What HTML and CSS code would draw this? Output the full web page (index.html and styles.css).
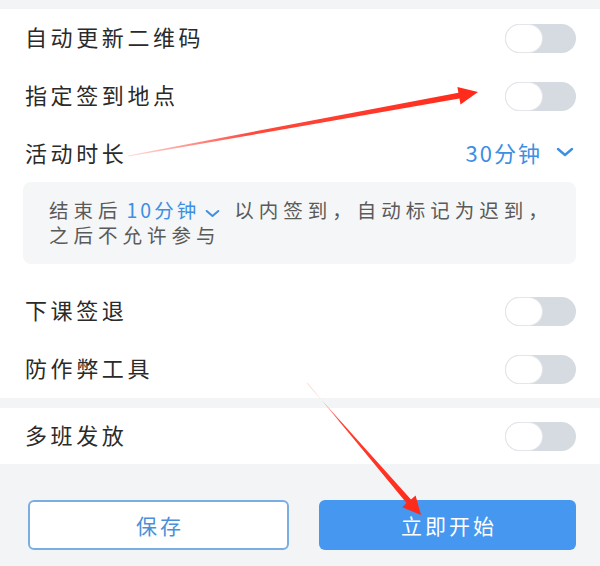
FILE: index.html
```html
<!DOCTYPE html>
<html lang="zh-CN">
<head>
<meta charset="utf-8">
<link rel="stylesheet" href="styles.css">
</head>
<body>
<div class="page">
  <div class="band"></div>
  <section class="card">
    <div class="row r58"><span class="label">自动更新二维码</span><span class="toggle"><span class="knob"></span></span></div>
    <div class="row r58"><span class="label">指定签到地点</span><span class="toggle"><span class="knob"></span></span></div>
    <div class="row r57"><span class="label">活动时长</span><span class="select">30分钟<svg class="chev" viewBox="0 0 18 10"><path d="M2 2 L9 8 L16 2" /></svg></span></div>
    <div class="note">
      <p>结束后<span class="blue">10分钟<svg class="chev small" viewBox="0 0 18 10"><path d="M2 2 L9 8 L16 2" /></svg></span>以内签到，自动标记为迟到，<br>之后不允许参与</p>
    </div>
    <div class="row r58"><span class="label">下课签退</span><span class="toggle"><span class="knob"></span></span></div>
    <div class="row r58"><span class="label">防作弊工具</span><span class="toggle"><span class="knob"></span></span></div>
  </section>
  <div class="gap"></div>
  <section class="card">
    <div class="row r56"><span class="label">多班发放</span><span class="toggle"><span class="knob"></span></span></div>
  </section>
  <footer class="footer">
    <button class="btn outline">保存</button>
    <button class="btn primary">立即开始</button>
  </footer>
  <svg class="arrows" viewBox="0 0 600 566" width="600" height="566">
    <defs>
      <linearGradient id="g1" gradientUnits="userSpaceOnUse" x1="128" y1="156" x2="476" y2="92">
        <stop offset="0" stop-color="#ff2a1a" stop-opacity="0.15"/>
        <stop offset="0.35" stop-color="#ff2a1a" stop-opacity="0.85"/>
        <stop offset="1" stop-color="#ff2a1a" stop-opacity="1"/>
      </linearGradient>
      <linearGradient id="g2" gradientUnits="userSpaceOnUse" x1="307" y1="383" x2="420" y2="513">
        <stop offset="0" stop-color="#ff2a1a" stop-opacity="0.15"/>
        <stop offset="0.3" stop-color="#ff2a1a" stop-opacity="0.9"/>
        <stop offset="1" stop-color="#ff2a1a" stop-opacity="1"/>
      </linearGradient>
    </defs>
    <polygon fill="url(#g1)" points="128.1,156.5 459.4,98.6 460.5,104.4 478,92 457.4,87.0 458.4,92.8 127.9,155.5"/>
    <polygon fill="url(#g2)" points="307.4,382.8 406.5,503.0 402.3,507.3 421,515 415.6,495.5 411.0,499.4 306.6,383.2"/>
  </svg>
</div>
</body>
</html>
```

FILE: styles.css
```css
* { box-sizing: border-box; }
html, body { margin: 0; padding: 0; }
body {
  background: #f3f4f6;
  font-family: "Noto Sans CJK SC", "Noto Sans", sans-serif;
  color: #2a2a2a;
}
.page {
  position: relative;
  width: 600px;
  height: 566px;
  overflow: hidden;
}
.band { height: 9px; }
.card {
  background: #ffffff;
  padding: 0 24px 0 24px;
}
.row {
  display: flex;
  align-items: center;
  justify-content: space-between;
}
.r58 { height: 58px; }
.r57 { height: 57px; }
.r56 { height: 56px; }
.label {
  font-size: 22px;
  letter-spacing: 3.6px;
  padding-left: 1px;
  line-height: 1;
  padding-bottom: 4px;
}
.toggle {
  width: 71px;
  height: 29px;
  border-radius: 15px;
  background: #d6dae1;
  display: flex;
  align-items: center;
  padding-left: 1px;
  margin-top: 1px;
}
.knob {
  width: 36px;
  height: 27px;
  border-radius: 14px;
  background: #ffffff;
  box-shadow: 0 0 0 1px #e4e6ea;
}
.select {
  display: flex;
  align-items: center;
  color: #3d8fe3;
  font-size: 22px;
  letter-spacing: 2px;
  line-height: 1;
  padding-bottom: 4px;
}
.chev {
  width: 18px;
  height: 10px;
  margin-left: 14px;
  margin-right: 2px;
  fill: none;
  stroke: #3d8fe3;
  stroke-width: 2.4;
  stroke-linecap: round;
  stroke-linejoin: round;
}
.chev.small { width: 15px; height: 9px; margin-left: 6px; margin-right: 14px; }
.note {
  background: #f5f6f7;
  border-radius: 8px;
  margin: 0 0 18px -1px;
  padding: 15px 20px 16px 26px;
  height: 82px;
}
.note p {
  margin: 0;
  font-size: 19.5px;
  letter-spacing: 5px;
  line-height: 25px;
  color: #5a5a5a;
  white-space: nowrap;
}
.blue { color: #3d8fe3; letter-spacing: 3px; margin-left: 4px; }
.gap { height: 10px; }
.footer {
  display: flex;
  gap: 30px;
  padding: 36px 24px 16px 28px;
}
.btn {
  flex: 1;
  height: 50px;
  border-radius: 6px;
  font-family: "Noto Sans CJK SC", "Noto Sans", sans-serif;
  font-size: 21px;
  letter-spacing: 3px;
  text-indent: 3px;
  cursor: pointer;
}
.outline {
  background: #ffffff;
  border: 2px solid #7aaee3;
  color: #4a90d9;
}
.primary {
  background: #4597f0;
  border: none;
  color: #ffffff;
}
.arrows {
  position: absolute;
  left: 0;
  top: 0;
  pointer-events: none;
}
```
